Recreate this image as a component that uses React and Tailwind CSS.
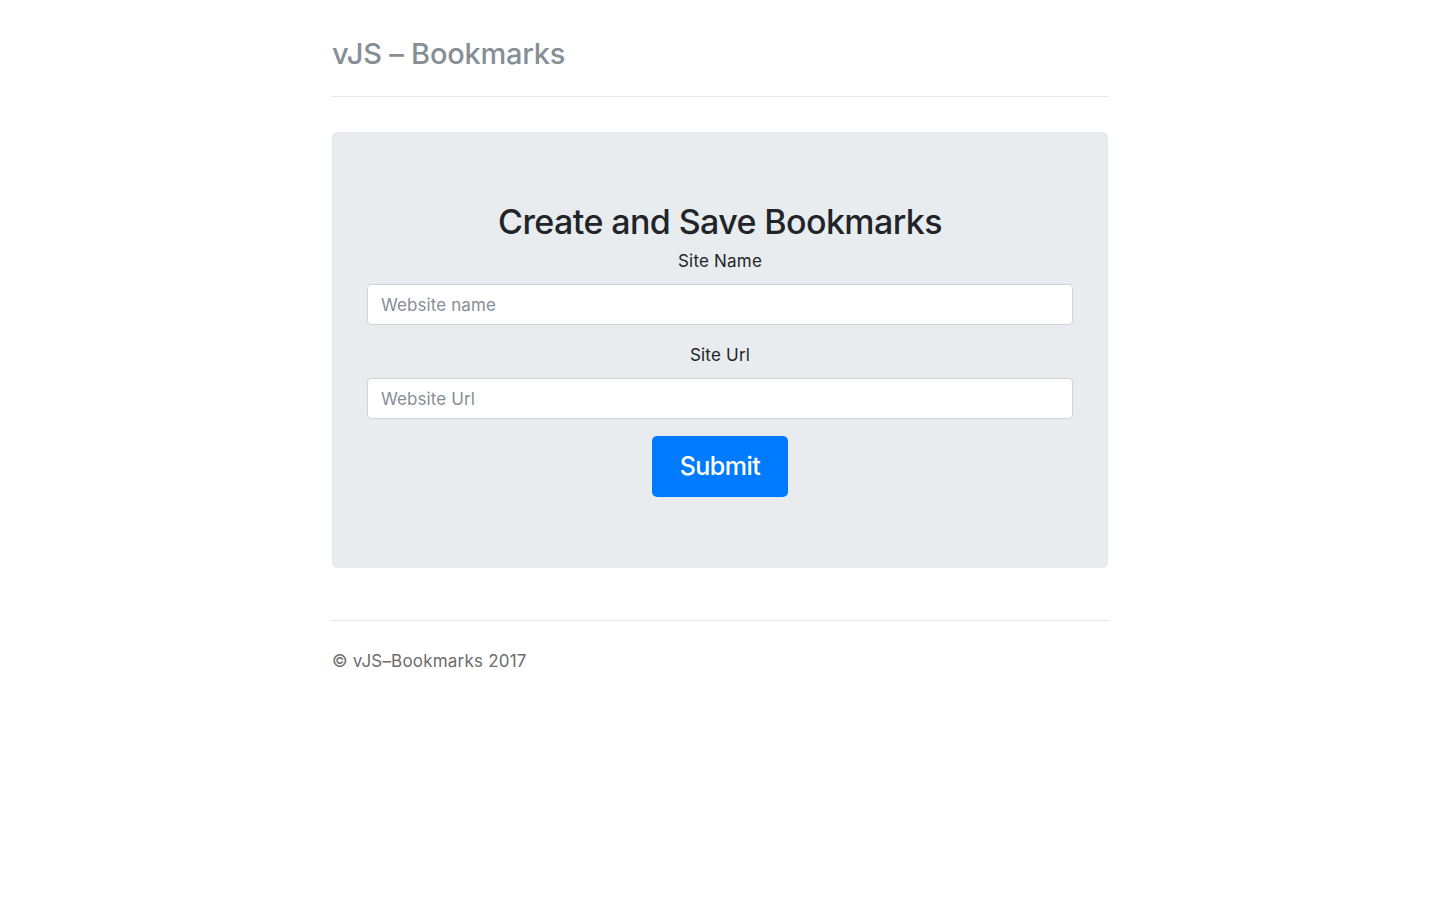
export default function App() {
  return (
    <div className="min-h-[900px] bg-white text-[#212529] font-['Inter','Liberation_Sans',sans-serif]">
      <div className="mx-auto w-[776px]">
        <header className="border-b border-[#e5e5e5] pt-[30px] pb-[18px]">
          <h3 className="text-[29px] leading-[48px] font-medium tracking-[-0.2px] text-[#868e96]">vJS – Bookmarks</h3>
        </header>

        <section className="mt-[35px] rounded-[5px] bg-[#e9ecef] px-[35px] pt-[68px] pb-[71px]">
          <h2 className="mb-[6px] text-center text-[34px] leading-[43px] font-medium tracking-[-0.6px]">
            Create and Save Bookmarks
          </h2>
          <form onSubmit={(e) => e.preventDefault()}>
            <div className="mb-[18px]">
              <label className="mb-[11px] block text-center text-[17px] leading-[24px] tracking-[0.2px]">Site Name</label>
              <input
                type="text"
                placeholder="Website name"
                className="block h-[41px] w-full rounded-[4px] border border-[#ced4da] bg-white px-[13px] text-[17px] tracking-[0.1px] text-[#495057] placeholder:text-[#868e96] outline-none"
              />
            </div>
            <div className="mb-[17px]">
              <label className="mb-[11px] block text-center text-[17px] leading-[24px] tracking-[0.2px]">Site Url</label>
              <input
                type="text"
                placeholder="Website Url"
                className="block h-[41px] w-full rounded-[4px] border border-[#ced4da] bg-white px-[13px] text-[17px] tracking-[0.1px] text-[#495057] placeholder:text-[#868e96] outline-none"
              />
            </div>
            <div className="flex justify-center">
              <button
                type="submit"
                className="h-[61px] w-[136px] rounded-[5px] bg-[#007bff] text-[25px] font-medium tracking-[-0.5px] text-white"
              >
                Submit
              </button>
            </div>
          </form>
        </section>

        <footer className="mt-[52px] border-t border-[#e5e5e5] pt-[28px]">
          <p className="text-[17px] leading-[24px] tracking-[0.2px] text-[#6c6c6c]">© vJS–Bookmarks 2017</p>
        </footer>
      </div>
    </div>
  );
}
